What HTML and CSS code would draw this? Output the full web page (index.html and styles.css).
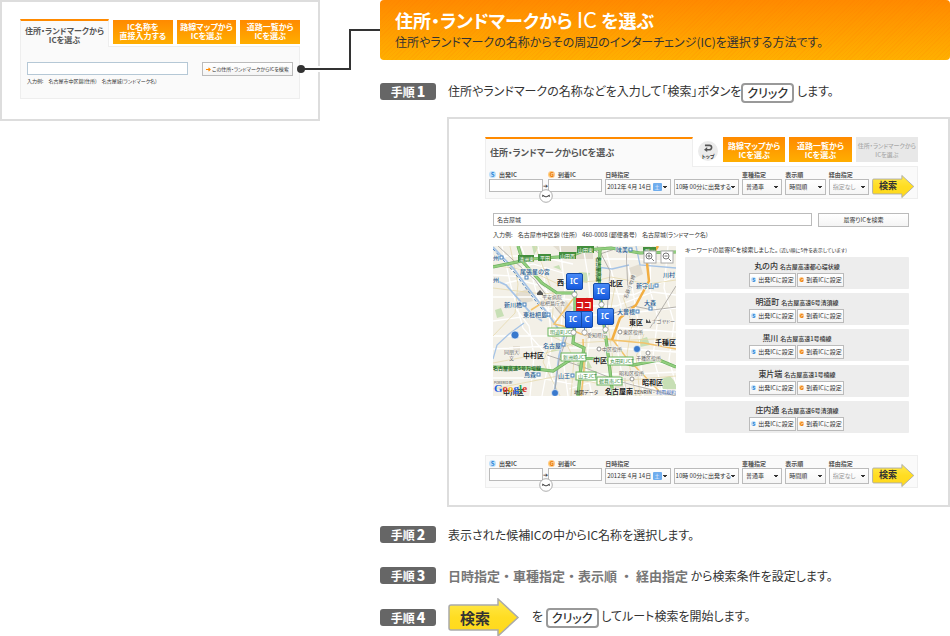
FILE: index.html
```html
<!DOCTYPE html>
<html lang="ja">
<head>
<meta charset="utf-8">
<title>住所・ランドマークからICを選ぶ</title>
<link rel="stylesheet" href="styles.css">
</head>
<body>
<svg class="defs" aria-hidden="true">
  <defs>
    <linearGradient id="yellow" x1="0" y1="0" x2="0" y2="1">
      <stop offset="0" stop-color="#ffe94e"/><stop offset="0.5" stop-color="#ffdd22"/><stop offset="1" stop-color="#ffd81c"/>
    </linearGradient>
    <linearGradient id="blue" x1="0" y1="0" x2="0" y2="1">
      <stop offset="0" stop-color="#4a8cf8"/><stop offset="1" stop-color="#1458dd"/>
    </linearGradient>
    <symbol id="arrow" viewBox="0 0 72 39">
      <path d="M3 7H50V1L70 19.500L50 38V32H3Q1 32 1 30V9Q1 7 3 7Z" fill="url(#yellow)" stroke="#aaa" stroke-width="1.500"/>
    </symbol>
    <symbol id="pin" viewBox="0 0 17 25">
      <path d="M8.500 14V21" stroke="#4b7fd0" stroke-width="1"/>
      <circle cx="8.500" cy="21.500" r="2.600" fill="#fff" stroke="#888" stroke-width=".7"/>
      <rect x=".5" y=".5" width="16" height="16" rx="1.500" fill="url(#blue)" stroke="#144ba8"/>
    </symbol>
    <symbol id="swap" viewBox="0 0 14 14">
      <circle cx="7" cy="7" r="6.300" fill="#fff" stroke="#999" stroke-width=".8"/>
      <path d="M4.500 7Q7 8.800 9.500 7" fill="none" stroke="#444" stroke-width="1"/>
      <path d="M3 8L3.400 5.500L5.500 6.800ZM11 8L10.600 5.500L8.500 6.800Z" fill="#444"/>
    </symbol>
  </defs>
</svg>

<div class="page">
  <aside class="preview">
    <nav class="tabs">
      <a class="tab current" href="#">住所・ランドマークから<br>ICを選ぶ</a>
      <a class="tab" href="#">IC名称を<br>直接入力する</a>
      <a class="tab" href="#">路線マップから<br>ICを選ぶ</a>
      <a class="tab" href="#">道路一覧から<br>ICを選ぶ</a>
    </nav>
    <form class="preview-form">
      <div class="preview-row">
        <input type="text" id="place" class="preview-input" aria-label="住所・ランドマーク">
        <button type="button" class="mini-button preview-button"><svg class="go" viewBox="0 0 6 6"><path d="M0 3H4M3 1L5 3L3 5" fill="none" stroke="#ff8a00" stroke-width="1.300"/></svg>この住所・ランドマークからICを検索</button>
      </div>
      <p class="example"><span>入力例:</span><span>名古屋市中区錦(住所)</span><span>名古屋城(ランドマーク名)</span></p>
    </form>
    <svg class="connector" viewBox="0 0 86 50" aria-hidden="true">
      <path d="M23 44H27" stroke="#fff" stroke-width="6"/>
      <path d="M7 44H56V5H86" fill="none" stroke="#333" stroke-width="2"/>
      <circle cx="7" cy="44" r="4" fill="#333"/>
    </svg>
  </aside>

  <main class="guide">
    <header class="banner">
      <h1>住所・ランドマークから <span class="light">IC</span> を選ぶ</h1>
      <p>住所やランドマークの名称からその周辺のインターチェンジ(IC)を選択する方法です。</p>
    </header>

    <section class="step first">
      <h2 class="step-no">手順<b>1</b></h2>
      <p>住所やランドマークの名称などを入力して「検索」ボタンを<span class="click">クリック</span> します。</p>
    </section>

    <section class="screen">
      <div class="screen-head">
        <h3>住所・ランドマークからICを選ぶ</h3>
        <a class="top-link" href="#"><svg viewBox="0 0 12 9"><path d="M2 1.500H7A2.500 2.500 0 0 1 7 6.500H3" fill="none" stroke="#555" stroke-width="1.800"/><path d="M4.500 3.500V9L1 6.500Z" fill="#555"/></svg>トップ</a>
        <nav class="tabs wide">
          <a class="tab" href="#">路線マップから<br>ICを選ぶ</a>
          <a class="tab" href="#">道路一覧から<br>ICを選ぶ</a>
          <a class="tab off" href="#">住所・ランドマークから<br>ICを選ぶ</a>
        </nav>
      </div>

      <form class="route">
        <div class="ics">
          <div class="field"><label for="a1"><i class="dot s">S</i>出発IC</label><input type="text" id="a1"></div>
          <span class="plus">➔</span>
          <div class="field"><label for="a2"><i class="dot g">G</i>到着IC</label><input type="text" id="a2"></div>
          <button type="button" class="swap" aria-label="入れ替え"><svg><use href="#swap"/></svg></button>
        </div>
        <div class="field when"><label for="a3">日時指定</label>
          <div class="pair"><span class="date"><select id="a3"><option>2012年 4月 14日</option></select><span class="day">土</span></span><select aria-label="時刻"><option>10時 00分に出発する</option></select></div>
        </div>
        <div class="field"><label for="a4">車種指定</label><select id="a4"><option>普通車</option></select></div>
        <div class="field"><label for="a5">表示順</label><select id="a5"><option>時間順</option></select></div>
        <div class="field"><label for="a6">経由指定</label><select id="a6" class="dim"><option>指定なし</option></select></div>
        <button type="button" class="go-arrow small"><svg><use href="#arrow"/></svg><span>検索</span></button>
      </form>

      <div class="finder">
        <form class="finder-row">
          <input type="text" aria-label="キーワード" value="名古屋城">
          <button type="button" class="mini-button">最寄りICを検索</button>
        </form>
        <p class="example"><span>入力例:</span><span>名古屋市中区錦 (住所)</span><span>460-0008 (郵便番号)</span><span>名古屋城(ランドマーク名)</span></p>

        <div class="results">
          <svg class="map" viewBox="0 0 183 150" role="img" aria-label="名古屋城周辺の地図">
            <rect width="183" height="150" fill="#f3f0e7"/>
            <g fill="#e3ddd0"><path d="M60 0H100V13H75ZM22 48L36 42L40 55L27 58ZM108 62H122V77H108ZM20 100H27V108H20ZM136 22L147 18L150 28L140 33ZM122 132H133V142H122ZM62 62L73 55L80 62L70 72Z"/></g>
            <g fill="#c7dfb5"><path d="M39 0H46L41 9ZM86 26L97 27L94 37L82 34ZM2 64L8 62L11 70L4 72ZM60 21L66 19L68 24ZM54 99L66 96L68 104L58 106ZM145 94L154 91L157 99L147 101ZM84 117L95 114L99 122L86 124ZM164 134L177 130L183 137V143H169Z"/></g>
            <g fill="none" stroke="#fff" stroke-width="1.300">
              <path d="M0 10H45L80 18M0 29L38 31L61 52L90 55M9 0L18 40L30 82L55 110L63 150M0 51H48L58 60M0 75L36 70L62 61M0 90H56M0 103L57 100M0 132H47L80 138M28 0L37 23L45 52L65 76M45 0L54 48L59 97L49 150M67 0L72 43L67 90L75 150M90 0L95 30L99 71L93 120L99 150M80 60H123L160 46L183 49M80 69H116L183 62M82 82H129L183 86M76 102H121L183 106M73 113H118L183 119M82 128H140L183 126M112 0L119 27L128 60L124 102L133 150M131 0L139 40L145 75L150 150M158 0L157 44L165 72L160 110L171 150M175 0L171 42L181 77L176 114L183 138M105 46L140 49L183 30M104 13H142L177 16M76 143L109 133L183 146M18 25L40 18L70 27M10 38L26 34L45 39M18 56L36 80L41 110L37 150"/>
            </g>
            <g fill="none" stroke="#e6d9ad" stroke-width=".8">
              <path d="M0 19L38 25L65 38L102 35L118 31L155 38L183 34M0 42L49 48L72 46M17 0L25 38L22 67L0 90M42 0L61 50L58 90L80 100M0 117L53 107L82 97L118 95L183 92M0 143L65 130L103 137L183 130M94 51L93 102L89 150M122 40L115 78L120 114L115 150M130 51L139 78L134 108L143 150M151 88L143 111L147 150M57 99L50 116L67 150M70 91L81 113L78 150"/>
            </g>
            <g fill="none" stroke="#a5c3e6" stroke-width="1.800">
              <path d="M0 1L21 23L32 38L55 68L71 91L66 110L61 150M0 33L13 39L36 65L49 75"/>
              <path d="M0 113L4 99L16 88L31 77M143 0L147 19L183 22M104 21L119 23L136 19" stroke-width="1.300"/>
            </g>
            <path d="M0 3L21 26L32 41L55 71" fill="none" stroke="#4a82c0" stroke-width="1" stroke-dasharray="3 2"/>
            <path d="M61 150L66 115L73 93L78 79L62 61L42 34L19 13L5 0M54 109L90 121L128 136L183 150M116 69L140 60L160 64L183 61M104 0L117 25L114 68M157 82L171 59L183 40M135 47L133 0M96 0L107 8L122 3" fill="none" stroke="#a5a19d" stroke-width=".8"/>
            <path d="M38 64L60 50L66 55M80 53L61 78L70 80L88 88L119 94L151 97L183 103M90 93L91 123L88 150M104 91L120 94L132 110L166 145" fill="none" stroke="#f3c36c" stroke-width="1.500"/>
            <path d="M165 0L154 17L156 35L143 59L127 72L119 94" fill="none" stroke="#f2ae42" stroke-width="2.500"/>
            <g fill="none">
              <path d="M0 21L38 13L78 10L92 4L118 2L147 7L183 6M25 0L30 16L49 37L64 47H82V77L80 97L91 102L88 120L85 150M107 4L106 31L109 64L114 100L120 150M0 121L35 122L60 125L80 112L115 113L140 119L166 114L183 121" stroke="#6aae5e" stroke-width="3.200"/>
              <path d="M0 21L38 13L78 10L92 4L118 2L147 7L183 6M25 0L30 16L49 37L64 47H82V77L80 97L91 102L88 120L85 150M107 4L106 31L109 64L114 100L120 150M0 121L35 122L60 125L80 112L115 113L140 119L166 114L183 121" stroke="#92ce7e" stroke-width="2"/>
            </g>
            <g class="road-name">
              <rect x="25" y="9" width="16" height="7"/><text x="26" y="15">清洲東</text>
              <rect x="45" y="8" width="13" height="7"/><text x="47" y="14">平田</text>
              <rect x="66" y="6" width="17" height="7"/><text x="67" y="12">山田西</text>
              <rect x="84" y="0" width="17" height="7"/><text x="85" y="6">山田東</text>
              <rect x="150" y="1" width="13" height="7"/><text x="152" y="7">勝川</text>
              <text class="plain" transform="translate(104 11) rotate(90)">名古屋高速</text>
              <text class="plain" x="0" y="124">名古屋高速5号万場線</text>
            </g>
            <g class="jct">
              <rect x="55" y="82" width="25" height="8"/><text x="57" y="88">明道町JCT</text>
              <rect x="68" y="107" width="25" height="8"/><text x="70" y="113">新洲崎JCT</text>
              <rect x="83" y="126" width="20" height="8"/><text x="85" y="132">山王JCT</text>
              <rect x="115" y="111" width="25" height="8"/><text x="117" y="117">丸田町JCT</text>
              <rect x="104" y="131" width="25" height="8"/><text x="106" y="137">鶴舞南JCT</text>
            </g>
            <g class="station">
              <text x="27" y="28">尾張星の宮</text><text x="11" y="61">新川橋</text><text x="30" y="71">東枇杷島</text><text x="50" y="102">名古屋</text><text x="31" y="131">烏森</text><text x="65" y="132">山王</text><text x="123" y="6">味美</text><text x="143" y="42">新守山</text><text x="124" y="68">大曽根</text><text x="151" y="59">大森</text><text x="170" y="31">川村</text><text x="0" y="14">州</text><text x="0" y="36">州</text>
            </g>
            <g fill="#fff" stroke="#4b83bd" stroke-width="1"><rect x="32" y="30" width="3" height="3"/><rect x="30" y="57" width="3" height="3"/><rect x="54" y="67" width="3" height="3"/><rect x="69" y="97" width="3" height="3"/><rect x="44" y="127" width="3" height="3"/><rect x="78" y="128" width="3" height="3"/><rect x="136" y="2" width="3" height="3"/><rect x="162" y="38" width="3" height="3"/><rect x="143" y="64" width="3" height="3"/><rect x="156" y="61" width="3" height="3"/><rect x="7" y="10" width="3" height="3"/></g>
            <g fill="#3979cd" stroke="#fff" stroke-width=".6"><circle cx="22" cy="89" r="4"/><circle cx="144" cy="103" r="3.500"/><circle cx="62" cy="147" r="3.500"/></g>
            <g class="office">
              <text x="49" y="53">平安病院</text><text x="47" y="59">枇杷島庁舎</text><text x="130" y="88">東区役所</text><text x="109" y="105">中区役所</text><text x="143" y="114">千種区役所</text><text x="126" y="129">昭和区役所</text><text x="11" y="108">同朋大</text><text x="16" y="114">文</text><text x="94" y="91">愛知県庁</text><text x="159" y="77">ナゴヤドー</text>
              <text transform="translate(134 53) rotate(-70)">名鉄小牧線</text>
            </g>
            <g fill="#fff" stroke="#777" stroke-width=".8"><circle cx="127" cy="86" r="2"/><circle cx="106" cy="103" r="2"/><circle cx="155" cy="107" r="2"/><circle cx="139" cy="133" r="2"/></g>
            <path d="M44 47L47 44L50 47V49H44ZM153 77V73L156 76V73L158 77Z" fill="#555"/>
            <g class="ward">
              <text x="64" y="39">西</text><text x="116" y="40">北区</text><text x="136" y="79">東区</text><text x="30" y="112">中村区</text><text x="100" y="117">中区</text><text x="162" y="99">千種区</text><text x="149" y="139">昭和区</text><text x="10" y="149">中川区</text><text x="112" y="148">名古屋南</text>
            </g>
            <text x="1" y="138" class="powered">POWERED BY</text>
            <text x="1" y="146" class="logo"><tspan fill="#245ee0">G</tspan><tspan fill="#d9362b">o</tspan><tspan fill="#edb512">o</tspan><tspan fill="#245ee0">g</tspan><tspan fill="#35a345">l</tspan><tspan fill="#d9362b">e</tspan></text>
            <g class="credit"><text x="81" y="148">地図データ</text><text x="141" y="148">ZENRIN -</text><text x="163" y="148" class="terms">利用規約</text></g>
            <g fill="#fff" stroke="#aaa"><rect x="151" y="5" width="12" height="12"/><rect x="168" y="5" width="12" height="12"/></g>
            <g fill="none" stroke="#777" stroke-width="1"><circle cx="156" cy="10" r="3"/><path d="M158.500 12.500L161 15M154.500 10H157.500M156 8.500V11.500"/><circle cx="173" cy="10" r="3"/><path d="M175.500 12.500L178 15M171.500 10H174.500"/></g>
            <g class="pins">
              <use href="#pin" x="83" y="65" width="17" height="25"/><text x="94" y="76">C</text>
              <rect x="83" y="52" width="17" height="13" fill="#d71316"/><text x="91" y="62" class="here">ココ</text>
              <use href="#pin" x="73" y="27" width="17" height="25"/><text x="81" y="38">IC</text>
              <use href="#pin" x="100" y="37" width="17" height="25"/><text x="108" y="48">IC</text>
              <use href="#pin" x="104" y="62" width="17" height="25"/><text x="112" y="73">IC</text>
              <use href="#pin" x="72" y="65" width="17" height="25"/><text x="80" y="76">IC</text>
            </g>
          </svg>
          <div class="found">
            <p class="found-note">キーワードの最寄ICを検索しました。 <small>(近い順に5件を表示しています)</small></p>
            <ul>
              <li><h4>丸の内 <small>名古屋高速都心環状線</small></h4><button type="button" class="mini-button"><i class="dot s">S</i>出発ICに設定</button><button type="button" class="mini-button"><i class="dot g">G</i>到着ICに設定</button></li>
              <li><h4>明道町 <small>名古屋高速6号清須線</small></h4><button type="button" class="mini-button"><i class="dot s">S</i>出発ICに設定</button><button type="button" class="mini-button"><i class="dot g">G</i>到着ICに設定</button></li>
              <li><h4>黒川 <small>名古屋高速1号楠線</small></h4><button type="button" class="mini-button"><i class="dot s">S</i>出発ICに設定</button><button type="button" class="mini-button"><i class="dot g">G</i>到着ICに設定</button></li>
              <li><h4>東片端 <small>名古屋高速1号楠線</small></h4><button type="button" class="mini-button"><i class="dot s">S</i>出発ICに設定</button><button type="button" class="mini-button"><i class="dot g">G</i>到着ICに設定</button></li>
              <li><h4>庄内通 <small>名古屋高速6号清須線</small></h4><button type="button" class="mini-button"><i class="dot s">S</i>出発ICに設定</button><button type="button" class="mini-button"><i class="dot g">G</i>到着ICに設定</button></li>
            </ul>
          </div>
        </div>
      </div>

      <form class="route">
        <div class="ics">
          <div class="field"><label for="b1"><i class="dot s">S</i>出発IC</label><input type="text" id="b1"></div>
          <span class="plus">➔</span>
          <div class="field"><label for="b2"><i class="dot g">G</i>到着IC</label><input type="text" id="b2"></div>
          <button type="button" class="swap" aria-label="入れ替え"><svg><use href="#swap"/></svg></button>
        </div>
        <div class="field when"><label for="b3">日時指定</label>
          <div class="pair"><span class="date"><select id="b3"><option>2012年 4月 14日</option></select><span class="day">土</span></span><select aria-label="時刻"><option>10時 00分に出発する</option></select></div>
        </div>
        <div class="field"><label for="b4">車種指定</label><select id="b4"><option>普通車</option></select></div>
        <div class="field"><label for="b5">表示順</label><select id="b5"><option>時間順</option></select></div>
        <div class="field"><label for="b6">経由指定</label><select id="b6" class="dim"><option>指定なし</option></select></div>
        <button type="button" class="go-arrow small"><svg><use href="#arrow"/></svg><span>検索</span></button>
      </form>
    </section>

    <section class="step">
      <h2 class="step-no">手順<b>2</b></h2>
      <p>表示された候補ICの中からIC名称を選択します。</p>
    </section>
    <section class="step">
      <h2 class="step-no">手順<b>3</b></h2>
      <p><strong>日時指定・車種指定・表示順 ・ 経由指定</strong> から検索条件を設定します。</p>
    </section>
    <section class="step last">
      <h2 class="step-no">手順<b>4</b></h2>
      <button type="button" class="go-arrow"><svg><use href="#arrow"/></svg><span>検索</span></button>
      <p>を <span class="click">クリック</span> してルート検索を開始します。</p>
    </section>
  </main>
</div>
</body>
</html>
```
FILE: styles.css
```css
* { box-sizing: border-box; margin: 0; padding: 0; }
body {
  background: #fff;
  color: #333;
  font-family: "Noto Sans CJK JP", sans-serif;
  font-size: 12px;
  line-height: 20px;
  font-feature-settings: "palt";
}
input, select, button {
  font-family: inherit;
  font-feature-settings: inherit;
  color: inherit;
  appearance: none;
  border-radius: 0;
  min-width: 0;
}
a { color: inherit; text-decoration: none; }
i { font-style: normal; }
ul { list-style: none; }
.defs { position: absolute; width: 0; height: 0; }

.page {
  display: grid;
  grid-template-columns: 320px minmax(0, 1fr);
  column-gap: 60px;
  align-items: start;
}

/* Tabs */
.tabs { display: flex; gap: 4px; }
.tab {
  flex: 1;
  height: 24px;
  margin-top: 1px;
  padding-top: 2px;
  background: linear-gradient(#ff8a00, #ffae00);
  color: #fff;
  font-size: 8px;
  font-weight: 700;
  line-height: 9px;
  text-align: center;
  white-space: nowrap;
}
.tab.current {
  position: relative;
  flex: 0 0 89px;
  height: 28px;
  margin: 0 0 -1px;
  padding-top: 5px;
  border: 1px solid #eee;
  border-top: 2px solid #ff8a00;
  border-bottom: 0;
  background: #fafafa;
  color: #555;
}
.tabs.wide { flex: 0 0 195px; }
.tabs.wide .tab { height: 25px; margin-top: 0; padding-top: 4px; }
.tabs.wide .tab.off {
  background: #e8e8e8;
  color: #aaa;
  font-size: 6px;
  font-weight: 500;
}

/* Preview card */
.preview {
  position: relative;
  padding: 17px 18px 20px;
  border: 2px solid #ddd;
}
.preview-form {
  height: 53px;
  padding: 15px 6px 0;
  border: 1px solid #eee;
  background: #fafafa;
}
.preview-row { display: flex; justify-content: space-between; }
.preview-input {
  width: 161px;
  height: 13px;
  border: 1px solid #b5c8d6;
  background: #fff;
}
.mini-button {
  display: inline-flex;
  align-items: center;
  justify-content: center;
  gap: 1px;
  height: 14px;
  border: 1px solid #bbb;
  background: linear-gradient(#fff, #f4f4f4);
  font-size: 6px;
  line-height: 8px;
  white-space: nowrap;
}
.preview-button { width: 91px; font-size: 5px; }
.go { flex: none; width: 5px; height: 5px; }
.example {
  display: flex;
  gap: 5px;
  font-size: 6px;
  line-height: 8px;
  white-space: nowrap;
}
.preview .example { margin-top: 1px; font-size: 5px; }
.connector {
  position: absolute;
  top: 23px;
  left: 292px;
  width: 86px;
  height: 50px;
}

/* Banner */
.banner {
  padding: 8px 15px;
  border-radius: 4px;
  background:
    repeating-linear-gradient(135deg, transparent 0 2px, rgba(255, 110, 0, .1) 2px 3px),
    linear-gradient(#ff8a00, #ffb000);
}
.banner h1 { color: #fff; font-size: 18px; font-weight: 700; line-height: 24px; }
.banner .light { font-size: 22px; font-weight: 400; line-height: 20px; }
.banner p { line-height: 20px; }

/* Steps */
.step {
  display: flex;
  align-items: center;
  gap: 12px;
  min-height: 20px;
  margin-top: 21px;
  white-space: nowrap;
}
.step-no {
  flex: none;
  width: 56px;
  height: 17px;
  border-radius: 3px;
  background: #666;
  color: #fff;
  font-size: 12px;
  font-weight: 700;
  line-height: 17px;
  text-align: center;
}
.step-no b { margin-left: 2px; font-size: 14px; }
.step strong { color: #777; font-size: 13px; font-feature-settings: normal; }
.step.last { margin-top: 12px; }
.click {
  display: inline-block;
  height: 20px;
  padding: 0 4px;
  border: 2px solid #999;
  border-radius: 4px;
  font-size: 12px;
  font-weight: 500;
  line-height: 16px;
  vertical-align: middle;
}
.go-arrow {
  position: relative;
  flex: none;
  width: 72px;
  height: 39px;
  border: 0;
  background: none;
  font-size: 15px;
  font-weight: 700;
  text-align: left;
}
.go-arrow svg { position: absolute; inset: 0; width: 100%; height: 100%; }
.go-arrow span { position: relative; padding-left: 12px; }
.go-arrow.small { width: 43px; height: 25px; margin-top: 3px; font-size: 9px; line-height: 12px; }
.go-arrow.small span { padding-left: 7px; }

/* Search screen */
.screen {
  margin: 14px 0 -3px 67px;
  padding: 18px 30px 17px 36px;
  border: 2px solid #ddd;
}
.screen-head { display: flex; align-items: flex-start; }
.screen-head h3 {
  position: relative;
  flex: 1;
  height: 30px;
  margin-bottom: -1px;
  padding-left: 4px;
  border-top: 2px solid #ff8a00;
  border-left: 1px solid #eee;
  border-right: 1px solid #eee;
  background: #fafafa;
  color: #555;
  font-size: 9px;
  line-height: 28px;
  white-space: nowrap;
}
.top-link {
  flex: none;
  display: flex;
  flex-direction: column;
  align-items: center;
  width: 20px;
  height: 20px;
  margin: 4px 5px 0;
  padding-top: 3px;
  border-radius: 50%;
  background: #ebebeb;
  font-size: 5px;
  font-weight: 700;
  line-height: 7px;
}
.top-link svg { width: 11px; height: 8px; }

.route {
  display: flex;
  align-items: flex-start;
  gap: 3px;
  height: 33px;
  padding: 4px 2px 0 3px;
  border: 1px solid #eee;
  background: #fafafa;
  font-size: 6px;
}
.ics { position: relative; flex: 115 1 0; display: flex; align-items: flex-end; }
.field { flex: 41 1 0; min-width: 0; }
.field label {
  display: block;
  height: 8px;
  color: #555;
  font-size: 6px;
  font-weight: 700;
  line-height: 8px;
  white-space: nowrap;
}
.field input, .field select, .finder-row input {
  display: block;
  width: 100%;
  height: 13px;
  border: 1px solid #bbb;
  background: #fff;
  font-size: 6px;
}
.field select {
  height: 16px;
  padding: 0 8px 0 3px;
  background:
    linear-gradient(#333, #333) right 3px top 6px / 4px 1px no-repeat,
    linear-gradient(#333, #333) right 4px top 7px / 2px 1px no-repeat,
    linear-gradient(#fff, #f5f5f5);
}
.field select.dim { color: #999; }
.when { flex-grow: 136; }
.pair { display: grid; grid-template-columns: 1fr 1fr; gap: 3px; }
.field .pair select { padding: 0 7px 0 1px; }
.date { position: relative; }
.day {
  position: absolute;
  top: 4px;
  right: 9px;
  width: 9px;
  height: 8px;
  border-radius: 1px;
  background: #6fadee;
  color: #fff;
  font-size: 5px;
  line-height: 8px;
  text-align: center;
}
.plus { flex: none; width: 5px; height: 13px; font-size: 6px; line-height: 13px; }
.swap {
  position: absolute;
  top: 18px;
  left: 50px;
  width: 14px;
  height: 14px;
  border: 0;
  background: none;
}
.swap svg { display: block; width: 14px; height: 14px; }
.dot {
  display: inline-block;
  flex: none;
  width: 7px;
  height: 7px;
  margin-right: 3px;
  border-radius: 50%;
  font-size: 6px;
  font-weight: 700;
  line-height: 7px;
  text-align: center;
}
.dot.s { background: #bfe0fa; color: #2580d4; }
.dot.g { background: #ffc987; color: #e87800; }

.finder { padding: 14px 9px 18px 8px; }
.finder-row { display: flex; gap: 6px; }
.finder-row input { flex: 1; padding-left: 3px; }
.finder-row .mini-button { flex: 0 0 91px; }
.finder .example { margin-top: 4px; }
.results {
  display: grid;
  grid-template-columns: 183px minmax(0, 1fr);
  column-gap: 9px;
  margin-top: 7px;
}
.found-note { height: 11px; font-size: 6px; line-height: 8px; white-space: nowrap; }
.found-note small { font-size: 5px; }
.found li {
  height: 32px;
  margin-bottom: 4px;
  padding-top: 3px;
  border-radius: 1px;
  background: #ededed;
  text-align: center;
  line-height: 0;
}
.found h4 { font-size: 8px; font-weight: 500; line-height: 12px; }
.found h4 small { font-size: 6px; }
.found .mini-button { width: 47px; margin: 0 1px 0 0; }
.found .dot { width: 5px; height: 5px; margin-right: 1px; font-size: 5px; line-height: 5px; }

/* Map */
.map { display: block; width: 100%; height: auto; }
.map text { font-size: 6px; }
.map .pins text {
  fill: #fff;
  font-family: "Noto Sans", "Noto Sans CJK JP", sans-serif;
  font-size: 8px;
  font-weight: 600;
  text-anchor: middle;
}
.map .pins .here { font-weight: 700; }
.road-name rect { fill: #438e3d; }
.map .road-name text { fill: #fff; font-size: 5px; }
.map .road-name .plain { fill: #27662b; font-weight: 700; }
.jct rect { fill: #fff; stroke: #69b35b; stroke-width: 1px; }
.map .jct text { fill: #398d3d; font-size: 5px; }
.station text, .office text, .ward text { paint-order: stroke; stroke: #f8f6ef; stroke-width: 1px; }
.station text { fill: #295c93; font-weight: 500; }
.office text { fill: #666; }
.map .office text { font-size: 5px; }
.map .ward text { fill: #222; font-size: 7px; font-weight: 700; }
.map .logo { font-family: "Liberation Serif", serif; font-size: 11px; font-weight: 700; }
.map .powered { font-size: 3px; fill: #444; }
.map .credit text { font-size: 5px; fill: #333; }
.map .credit .terms { fill: #446fc2; }
```
